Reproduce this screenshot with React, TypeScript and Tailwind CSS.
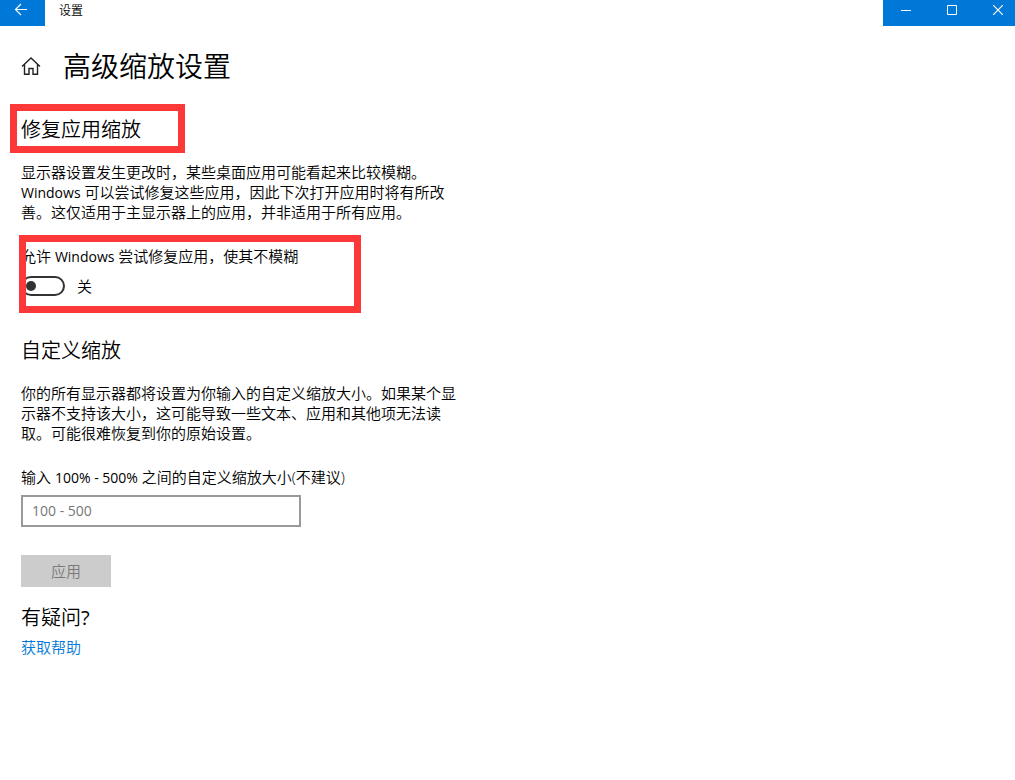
import { useState } from "react";
import type { FormEvent, ReactNode } from "react";

const captionButton = "flex h-full w-[46px] shrink-0 justify-center pt-[5px] hover:bg-[#1a86db]";

// Latin runs sit one step smaller than the Chinese text around them
function Latin({ children }: { children: ReactNode }) {
  return <span className="text-sm leading-none font-normal">{children}</span>;
}

function Highlight({ className }: { className: string }) {
  return <div className={`pointer-events-none absolute border-[7px] border-[#fd3838] ${className}`} />;
}

function TitleBar() {
  return (
    <header className="flex h-[26px] items-stretch justify-between">
      <div className="flex">
        <button type="button" aria-label="返回" className="flex w-[45px] justify-center bg-[#0078d7] pt-[3px] pr-[3px]">
          <svg width="14" height="14" viewBox="0 0 14 14" fill="none" stroke="#fff" strokeWidth="1.2">
            <path d="M13 6.5H1.5M7 1L1.5 6.5L7 12" />
          </svg>
        </button>
        <span className="pl-3.5 text-xs leading-[22px]">设置</span>
      </div>
      <div className="flex w-[132px] overflow-hidden bg-[#0078d7]">
        <button type="button" aria-label="最小化" className={captionButton}>
          <svg width="10" height="10" viewBox="0 0 10 10" stroke="#fff">
            <path d="M0 5.5H10" />
          </svg>
        </button>
        <button type="button" aria-label="最大化" className={captionButton}>
          <svg width="10" height="10" viewBox="0 0 10 10" fill="none" stroke="#fff">
            <path d="M0.5 0.5H9.5V9.5H0.5Z" />
          </svg>
        </button>
        <button type="button" aria-label="关闭" className={captionButton}>
          <svg width="10" height="10" viewBox="0 0 10 10" stroke="#fff" strokeWidth="1.2">
            <path d="M0 0L10 10M10 0L0 10" />
          </svg>
        </button>
      </div>
    </header>
  );
}

export default function App() {
  const [fixApps, setFixApps] = useState(false);
  const [scale, setScale] = useState("");

  const handleSubmit = (e: FormEvent) => {
    e.preventDefault();
    setScale("");
  };

  return (
    <div
      lang="zh-CN"
      className="min-h-screen bg-white font-['Open_Sans','Noto_Sans_CJK_SC',sans-serif] text-[15px] leading-5 font-[350] text-black"
    >
      <TitleBar />

      <main className="px-[21px] pb-8">
        {/* Page title */}
        <div className="mt-5 flex h-10 items-center gap-[22px]">
          <button type="button" aria-label="主页">
            <svg width="20" height="20" viewBox="0 0 20 20" fill="none" stroke="#222" strokeWidth="1.4">
              <path d="M1 10.5L10 2L19 10.5M3.5 8.5V18.3H8V12.5H12V18.3H16.5V8.5" />
            </svg>
          </button>
          <h1 className="text-[28px] leading-10">高级缩放设置</h1>
        </div>

        {/* Fix scaling for apps */}
        <section className="mt-[30px] max-w-[436px]">
          <div className="relative">
            <h2 className="text-xl leading-7">修复应用缩放</h2>
            <Highlight className="-top-3 -left-[11px] h-[49px] w-[175px]" />
          </div>
          <p className="mt-[18px]">
            显示器设置发生更改时，某些桌面应用可能看起来比较模糊。<Latin>Windows</Latin>{" "}
            可以尝试修复这些应用，因此下次打开应用时将有所改善。这仅适用于主显示器上的应用，并非适用于所有应用。
          </p>
          <div className="relative mt-6">
            <label htmlFor="fix-apps" className="block">
              允许 <Latin>Windows</Latin> 尝试修复应用，使其不模糊
            </label>
            <div className="mt-[10px] flex h-5 items-center gap-3">
              <input
                id="fix-apps"
                type="checkbox"
                role="switch"
                checked={fixApps}
                onChange={(e) => setFixApps(e.target.checked)}
                className="flex h-5 w-11 appearance-none items-center rounded-full border-2 border-[#333] px-[3px] before:size-2.5 before:rounded-full before:bg-[#333] checked:justify-end checked:border-[#0078d7] checked:bg-[#0078d7] checked:before:bg-white"
              />
              <span>{fixApps ? "开" : "关"}</span>
            </div>
            <Highlight className="-top-[11px] -left-0.5 h-[78px] w-[342px]" />
          </div>
        </section>

        {/* Custom scaling */}
        <section className="mt-[41px] max-w-[436px]">
          <h2 className="text-xl leading-7">自定义缩放</h2>
          <p className="mt-[18px]">
            你的所有显示器都将设置为你输入的自定义缩放大小。如果某个显示器不支持该大小，这可能导致一些文本、应用和其他项无法读取。可能很难恢复到你的原始设置。
          </p>
          <form onSubmit={handleSubmit} className="mt-6">
            <label htmlFor="scale" className="block">
              输入 <Latin>100% - 500%</Latin> 之间的自定义缩放大小(不建议)
            </label>
            <input
              id="scale"
              type="text"
              placeholder="100 - 500"
              value={scale}
              onChange={(e) => setScale(e.target.value)}
              className="mt-2 block h-8 w-[280px] border-2 border-[#999] px-[9px] pb-0.5 text-sm font-normal outline-none placeholder:text-[#767676] focus:border-[#0078d7]"
            />
            <button
              type="submit"
              disabled={!scale}
              className="mt-7 block h-8 w-[90px] bg-[#ccc] disabled:text-[#7a7a7a]"
            >
              应用
            </button>
          </form>
        </section>

        {/* Help */}
        <section className="mt-[17px]">
          <h2 className="text-xl leading-7">
            有疑问<span className="font-normal">?</span>
          </h2>
          <a href="#help" className="mt-[5px] inline-block text-[#0078d7]">
            获取帮助
          </a>
        </section>
      </main>
    </div>
  );
}
